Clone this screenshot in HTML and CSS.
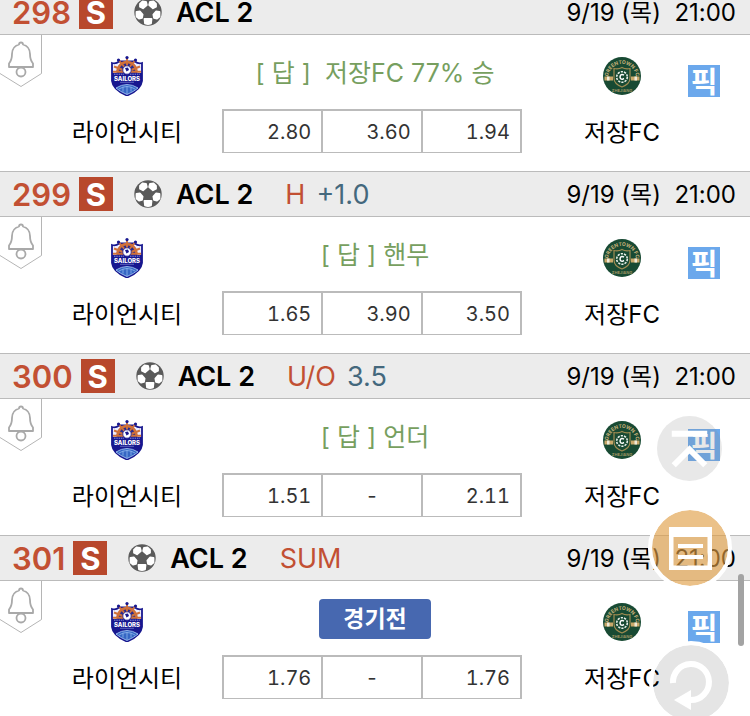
FILE: index.html
```
<!DOCTYPE html>
<html lang="ko">
<head>
    <meta charset="UTF-8">
    <meta name="viewport" content="width=device-width, initial-scale=1.0">
    <title>경기 목록</title>
    <link rel="stylesheet" href="styles.css">
</head>
<body>
    <svg class="sprite" aria-hidden="true">
        <symbol id="bell" viewBox="0 0 42 52">
            <path d="M41.5 0V38.500L21 51.500L0 38.500" fill="#fff" stroke="#b5b5b5"/>
            <path d="M19 9.500Q19 7.500 21 7.500Q23 7.500 23 9.500C28 11 30 14.500 30 19C30 24 30.500 25.500 33 28.500V32H9V28.500C11.500 25.500 12 24 12 19C12 14.500 14 11 19 9.500Z" fill="none" stroke="#a9a9a9" stroke-width="1.800" stroke-linejoin="round"/>
            <circle cx="21" cy="37" r="4.500" fill="#fff" stroke="#a9a9a9" stroke-width="1.800"/>
        </symbol>
        <symbol id="ball" viewBox="0 0 28 28">
            <circle cx="14" cy="14" r="13.700" fill="#5a5a5a"/>
            <g fill="#fff" stroke="#fff" stroke-width="1.800" stroke-linejoin="round">
                <path d="M8.500 3.500L12 3.800L12.800 7L9 10.300L6 8.800L6 6Z"/>
                <path d="M19.500 3.500L16 3.800L15.200 7L19 10.300L22 8.800L22 6Z"/>
                <path d="M2.500 14L6 13.500L8.600 16.500L8 19.800L5 20.500L2.500 18.500Z"/>
                <path d="M25.500 14L22 13.500L19.400 16.500L20 19.800L23 20.500L25.500 18.500Z"/>
                <path d="M10.500 21H17.500L17 25.500Q14 26.500 11 25.500Z"/>
            </g>
        </symbol>
        <symbol id="sailors" viewBox="0 0 32 40">
            <path d="M1 7Q5 8 8 5.500H24Q27 8 31 7V25Q30 34 16 39.500Q2 34 1 25Z" fill="#eef" stroke="#17178f" stroke-width="1.800"/>
            <path d="M1 17H31V25Q30 34 16 39.500Q2 34 1 25Z" fill="#17178f"/>
            <path d="M5.500 17A10.500 11 0 0 1 26.500 17Z" fill="#2b2b8c"/>
            <g fill="none" stroke="#d0713a">
                <path d="M6.500 16A9.500 10 0 0 1 25.500 16" stroke-width="2.400"/>
                <path d="M16 2V13M8 4.500L16 14M24 4.500L16 14M3 10.500L16 15.500M29 10.500L16 15.500M2 15.800H30" stroke-width="1.900"/>
            </g>
            <g fill="#17178f">
                <circle cx="16" cy="1.600" r="1.600"/>
                <circle cx="7.500" cy="4" r="1.600"/>
                <circle cx="24.500" cy="4" r="1.600"/>
            </g>
            <circle cx="16" cy="14" r="4.200" fill="#fff" stroke="#17178f" stroke-width=".8"/>
            <path d="M14 12L17 11.500L18 14L15.500 15.500Z" fill="#17178f"/>
            <path d="M3 18.200H13M19 18.200H29" stroke="#8a91d8" stroke-width="1" stroke-dasharray="1.500 .8"/>
            <text x="16" y="24.500" text-anchor="middle" class="crest-name">SAILORS</text>
            <path d="M9 26.300H23" stroke="#6f78c8" stroke-width=".8"/>
            <path d="M5 32Q16 25 27 32Q23 35.500 16 38.500Q9 35.500 5 32Z" fill="#3566c4" stroke="#9fc2f2" stroke-width=".9"/>
            <path d="M8 33Q16 28 24 33M12 31V35.500M16 30V38M20 31V35.500" fill="none" stroke="#8fb6ec" stroke-width=".8"/>
        </symbol>
        <symbol id="greentown" viewBox="0 0 38 38">
            <circle cx="19" cy="19" r="19" fill="#184a33"/>
            <path id="arc-top" d="M5 21A13.500 13.500 0 1 1 33 21" fill="none"/>
            <text class="crest-ring"><textPath href="#arc-top" startOffset="50%" text-anchor="middle">GREENTOWN FC</textPath></text>
            <text x="19" y="34.500" text-anchor="middle" class="crest-city">ZHEJIANG</text>
            <path d="M1.500 19.500H10V23.500H1.500ZM28 19.500H36.500V23.500H28Z" fill="#c9a86a"/>
            <path d="M4 19.500H6.500V23.500H4ZM31.500 19.500H34V23.500H31.500Z" fill="#f0ead8"/>
            <path d="M11 11.500Q15.500 12.500 19 10.500Q22.500 12.500 27 11.500V21Q27 27 19 30Q11 27 11 21Z" fill="#184a33" stroke="#a08c52" stroke-width="1.200"/>
            <circle cx="19" cy="20" r="5.300" fill="none" stroke="#e8efe9" stroke-width="1.600" stroke-dasharray="2.200 1.100"/>
            <path d="M21 18.200Q18.500 16.500 17.200 19Q16.500 22 19.500 22.300L21 21.500" fill="none" stroke="#fff" stroke-width="1.500"/>
        </symbol>
    </svg>

    <main class="match-list">
        <section class="match">
            <header class="match-head">
                <span class="number">298</span>
                <span class="single">S</span>
                <svg class="ball"><use href="#ball"/></svg>
                <span class="league">ACL 2</span>
                <time class="date">9/19 (목)&nbsp; 21:00</time>
            </header>
            <div class="match-body">
                <button class="alarm" aria-label="알림"><svg><use href="#bell"/></svg></button>
                <div class="team home">
                    <svg class="crest sailors"><use href="#sailors"/></svg>
                    <span>라이언시티</span>
                </div>
                <div class="center">
                    <p class="answer">[ 답 ]&nbsp; 저장FC 77% 승</p>
                    <table class="odds">
                        <tr><td>2.80</td><td>3.60</td><td>1.94</td></tr>
                    </table>
                </div>
                <div class="away-side">
                    <div class="team">
                        <svg class="crest"><use href="#greentown"/></svg>
                        <span>저장FC</span>
                    </div>
                    <button class="pick">픽</button>
                </div>
            </div>
        </section>

        <section class="match">
            <header class="match-head">
                <span class="number">299</span>
                <span class="single">S</span>
                <svg class="ball"><use href="#ball"/></svg>
                <span class="league">ACL 2</span>
                <span class="type">H</span>
                <span class="line">+1.0</span>
                <time class="date">9/19 (목)&nbsp; 21:00</time>
            </header>
            <div class="match-body">
                <button class="alarm" aria-label="알림"><svg><use href="#bell"/></svg></button>
                <div class="team home">
                    <svg class="crest sailors"><use href="#sailors"/></svg>
                    <span>라이언시티</span>
                </div>
                <div class="center">
                    <p class="answer">[ 답 ] 핸무</p>
                    <table class="odds">
                        <tr><td>1.65</td><td>3.90</td><td>3.50</td></tr>
                    </table>
                </div>
                <div class="away-side">
                    <div class="team">
                        <svg class="crest"><use href="#greentown"/></svg>
                        <span>저장FC</span>
                    </div>
                    <button class="pick">픽</button>
                </div>
            </div>
        </section>

        <section class="match">
            <header class="match-head">
                <span class="number">300</span>
                <span class="single">S</span>
                <svg class="ball"><use href="#ball"/></svg>
                <span class="league">ACL 2</span>
                <span class="type">U/O</span>
                <span class="line">3.5</span>
                <time class="date">9/19 (목)&nbsp; 21:00</time>
            </header>
            <div class="match-body">
                <button class="alarm" aria-label="알림"><svg><use href="#bell"/></svg></button>
                <div class="team home">
                    <svg class="crest sailors"><use href="#sailors"/></svg>
                    <span>라이언시티</span>
                </div>
                <div class="center">
                    <p class="answer">[ 답 ] 언더</p>
                    <table class="odds">
                        <tr><td>1.51</td><td class="none">-</td><td>2.11</td></tr>
                    </table>
                </div>
                <div class="away-side">
                    <div class="team">
                        <svg class="crest"><use href="#greentown"/></svg>
                        <span>저장FC</span>
                    </div>
                    <button class="pick">픽</button>
                </div>
            </div>
        </section>

        <section class="match">
            <header class="match-head">
                <span class="number">301</span>
                <span class="single">S</span>
                <svg class="ball"><use href="#ball"/></svg>
                <span class="league">ACL 2</span>
                <span class="type">SUM</span>
                <time class="date">9/19 (목)&nbsp; 21:00</time>
            </header>
            <div class="match-body">
                <button class="alarm" aria-label="알림"><svg><use href="#bell"/></svg></button>
                <div class="team home">
                    <svg class="crest sailors"><use href="#sailors"/></svg>
                    <span>라이언시티</span>
                </div>
                <div class="center">
                    <button class="status">경기전</button>
                    <table class="odds">
                        <tr><td>1.76</td><td class="none">-</td><td>1.76</td></tr>
                    </table>
                </div>
                <div class="away-side">
                    <div class="team">
                        <svg class="crest"><use href="#greentown"/></svg>
                        <span>저장FC</span>
                    </div>
                    <button class="pick">픽</button>
                </div>
            </div>
        </section>
    </main>

    <!-- Floating buttons -->
    <button class="float to-top" aria-label="맨 위로">
        <svg viewBox="0 0 66 66"><path d="M15 18H51M17 50L33 34L49 50" fill="none" stroke="#fff" stroke-width="6"/></svg>
    </button>
    <button class="float slip" aria-label="구매표">
        <svg viewBox="0 0 76 76"><path d="M17 17H60V60H17ZM21.500 27V55.500H55.500V27Z" fill="#fff" fill-rule="evenodd"/><path d="M26 36H51M26 47H51" stroke="#fff" stroke-width="4"/></svg>
    </button>
    <button class="float refresh" aria-label="새로고침">
        <svg viewBox="0 0 76 76"><path d="M20 38A18 18 0 1 1 38 55" fill="none" stroke="#fff" stroke-width="6"/><path d="M21 55L38 45V65Z" fill="#fff"/></svg>
    </button>
    <div class="scroll-thumb"></div>
</body>
</html>
```
FILE: styles.css
```
* {
    box-sizing: border-box;
}

body {
    font-family: 'Inter', 'Noto Sans CJK KR', sans-serif;
    margin: 0;
    background-color: #fff;
    color: #000;
    height: 100vh;
    overflow: hidden;
    position: relative;
}

button {
    font-family: inherit;
    padding: 0;
    border: none;
    background: none;
    cursor: pointer;
}

svg {
    display: block;
}

.sprite {
    display: none;
}

/* list is scrolled a little past the first header */
.match-list {
    margin-top: -11px;
}

.match-head {
    display: flex;
    align-items: center;
    padding: 4px 14px 4px 12px;
    background-color: #ececec;
    border-top: 1px solid #bbb;
    border-bottom: 1px solid #bbb;
    font-size: 27px;
    line-height: 34px;
    white-space: nowrap;
}

.number,
.league,
.type,
.line,
.date {
    padding-top: 2px;
}

.number {
    color: #c25033;
    font-size: 31px;
    font-weight: 600;
    margin-right: 8px;
}

.single {
    width: 34px;
    height: 34px;
    background-color: #b8482c;
    color: #fff;
    font-size: 31px;
    font-weight: 700;
    line-height: 36px;
    text-align: center;
}

.ball {
    width: 28px;
    height: 28px;
    margin: 0 14px 0 21px;
}

.league {
    font-weight: 600;
    margin-right: 32px;
}

.type {
    color: #c25033;
    margin-right: 11px;
}

.line {
    color: #44687d;
}

.date {
    margin-left: auto;
    font-size: 24px;
}

.match-body {
    display: grid;
    grid-template-columns: 1fr 300px 1fr;
    position: relative;
    padding: 0 6px 18px 0;
}

.alarm {
    position: absolute;
    top: 0;
    left: 0;
}

.alarm svg {
    width: 42px;
    height: 52px;
}

.team {
    display: flex;
    flex-direction: column;
    align-items: center;
    gap: 19px;
    padding-top: 21px;
    font-size: 24px;
    line-height: 36px;
    white-space: nowrap;
}

.home {
    padding-left: 32px;
}

.crest {
    width: 38px;
    height: 40px;
}

.sailors {
    width: 32px;
}

.crest-name {
    fill: #fff;
    font-size: 6px;
    font-weight: 800;
}

.crest-ring {
    fill: #c9b27a;
    font-size: 5px;
    font-weight: 700;
}

.crest-city {
    fill: #a99c66;
    font-size: 4px;
    font-weight: 600;
}

.center {
    display: flex;
    flex-direction: column;
    align-items: center;
    gap: 16px;
    padding-top: 18px;
}

.answer {
    margin: 0 0 0 6px;
    color: #779f5f;
    font-size: 25px;
    line-height: 40px;
    white-space: nowrap;
}

.status {
    width: 112px;
    height: 40px;
    margin-left: 6px;
    border-radius: 4px;
    background-color: #4768b0;
    color: #fff;
    font-size: 23px;
    font-weight: 700;
    line-height: 40px;
}

.odds {
    width: 100%;
    height: 44px;
    table-layout: fixed;
    border-collapse: separate;
    border-spacing: 0;
    border: 2px solid #bbb;
    border-left-width: 0;
    border-bottom-width: 1px;
    color: #333;
    font-size: 20px;
    font-variant-numeric: tabular-nums;
    text-align: right;
}

.odds td {
    padding: 0 10px 0 0;
    border-left: 2px solid #bbb;
}

.odds .none {
    padding-right: 0;
    text-align: center;
}

.away-side {
    display: flex;
    align-items: flex-start;
    padding-right: 24px;
}

.away-side .team {
    flex: 1;
    padding-left: 34px;
}

.pick {
    width: 32px;
    height: 32px;
    margin-top: 30px;
    padding-top: 3px;
    background-color: #6ba8ec;
    color: #fff;
    font-size: 29px;
    font-weight: 700;
    line-height: 29px;
}

.float {
    position: fixed;
    border-radius: 50%;
    background-clip: padding-box;
}

.to-top {
    right: 28px;
    bottom: 235px;
    width: 65px;
    height: 65px;
    background-color: rgba(140, 140, 140, 0.2);
}

.slip {
    right: 18px;
    bottom: 126px;
    width: 84px;
    height: 84px;
    border: 4px solid #fff;
    background-color: rgba(223, 158, 69, 0.64);
}

.refresh {
    right: 17px;
    bottom: -9px;
    width: 84px;
    height: 84px;
    border: 4px solid #fff;
    background-color: rgba(0, 0, 0, 0.1);
}

.scroll-thumb {
    position: fixed;
    right: 6px;
    bottom: 70px;
    width: 6px;
    height: 72px;
    border-radius: 3px;
    background-color: #a3a3a3;
}
```
